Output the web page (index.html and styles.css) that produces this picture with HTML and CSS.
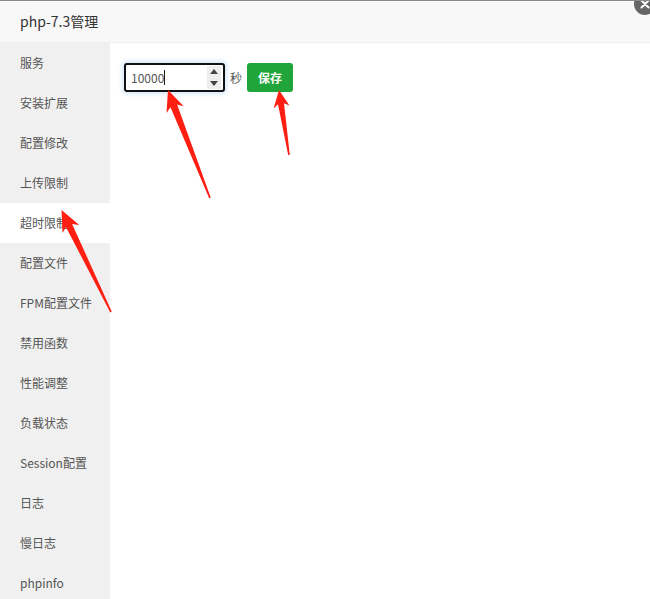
FILE: index.html
```html
<!DOCTYPE html>
<html lang="zh">
<head>
<meta charset="utf-8">
<title>php-7.3管理</title>
<link rel="stylesheet" href="styles.css">
</head>
<body>
<div class="modal">
  <div class="title">php-7.3管理</div>
  <span class="close"><svg viewBox="0 0 22 22" width="22" height="22"><circle cx="11" cy="11" r="11" fill="#666"/><path d="M7.5 7.5 L14.5 14.5 M14.5 7.5 L7.5 14.5" stroke="#fff" stroke-width="2" stroke-linecap="round"/></svg></span>
  <div class="body">
    <ul class="menu">
      <li>服务</li>
      <li>安装扩展</li>
      <li>配置修改</li>
      <li>上传限制</li>
      <li class="active">超时限制</li>
      <li>配置文件</li>
      <li>FPM配置文件</li>
      <li>禁用函数</li>
      <li>性能调整</li>
      <li>负载状态</li>
      <li>Session配置</li>
      <li>日志</li>
      <li>慢日志</li>
      <li>phpinfo</li>
    </ul>
    <div class="content">
      <div class="row">
        <div class="num">
          <span class="val">10000<span class="caret"></span></span>
          <span class="spin"><span class="up"></span><span class="down"></span></span>
        </div>
        <span class="unit">秒</span>
        <span class="btn">保存</span>
      </div>
    </div>
  </div>
  <svg class="arrows" width="650" height="599" viewBox="0 0 650 599">
    <polygon fill="#ff1e12" points="168,89 166.5,112 170.5,106.2 209.2,197.3 210.8,196.7 177.1,103.6 183.7,105.3"/>
    <polygon fill="#ff1e12" points="279,89 273.6,107.5 278,103.3 288.2,154 289.8,154 284,102.3 289.4,104.6"/>
    <polygon fill="#ff1e12" points="61.5,209 62.6,232 65.9,225.9 110.3,311.4 111.7,310.6 72.1,222.9 79.3,224"/>
  </svg>
</div>
</body>
</html>
```
FILE: styles.css
```css
html, body {
  margin: 0;
  padding: 0;
  background: #fff;
}
body {
  font-family: "Noto Sans CJK SC", "Microsoft YaHei", sans-serif;
  font-size: 12px;
  color: #555;
}
.modal {
  position: relative;
  width: 650px;
  height: 599px;
  overflow: hidden;
  background: #fff;
  border-top: 1px solid #8a8a8a;
  box-sizing: border-box;
}
.title {
  height: 41px;
  line-height: 41px;
  padding-left: 20px;
  font-size: 14px;
  color: #333;
  background: #f8f8f8;
  border-bottom: 1px solid #eee;
}
.close {
  position: absolute;
  top: -8px;
  right: -6px;
  width: 22px;
  height: 22px;
}
.close svg { display: block; }
.body {
  display: flex;
  height: 556px;
}
.menu {
  list-style: none;
  margin: 0;
  padding: 0;
  width: 110px;
  flex: none;
  background: #f0f0f0;
}
.menu li {
  height: 40px;
  line-height: 40px;
  padding-left: 20px;
  color: #555;
  white-space: nowrap;
}
.menu li.active {
  background: #fff;
}
.content {
  flex: 1;
  padding: 20px 0 0 14px;
}
.row {
  display: flex;
  align-items: center;
}
.num {
  display: flex;
  width: 101px;
  height: 29px;
  box-sizing: border-box;
  border: 2px solid #111;
  border-radius: 3px;
  box-shadow: 0 0 4px 2px #d6e8fb;
  background: #fff;
}
.val {
  flex: 1;
  display: flex;
  align-items: center;
  padding-left: 5px;
  font-family: "Noto Sans CJK SC", sans-serif;
  font-size: 12px;
  color: #555;
}
.caret {
  display: inline-block;
  width: 1px;
  height: 15px;
  background: #222;
}
.spin {
  width: 14px;
  margin: 1px 2px 1px 0;
  background: #eee;
  display: flex;
  flex-direction: column;
  justify-content: space-around;
  align-items: center;
}
.up, .down {
  width: 0;
  height: 0;
  border-left: 4px solid transparent;
  border-right: 4px solid transparent;
}
.up { border-bottom: 5px solid #444; }
.down { border-top: 5px solid #444; }
.unit {
  margin-left: 5px;
  color: #555;
}
.btn {
  margin-left: 5px;
  width: 46px;
  height: 29px;
  line-height: 29px;
  text-align: center;
  background: #20a53a;
  color: #fff;
  font-weight: bold;
  border-radius: 3px;
}
.arrows {
  position: absolute;
  left: 0;
  top: 0;
  pointer-events: none;
}
```
